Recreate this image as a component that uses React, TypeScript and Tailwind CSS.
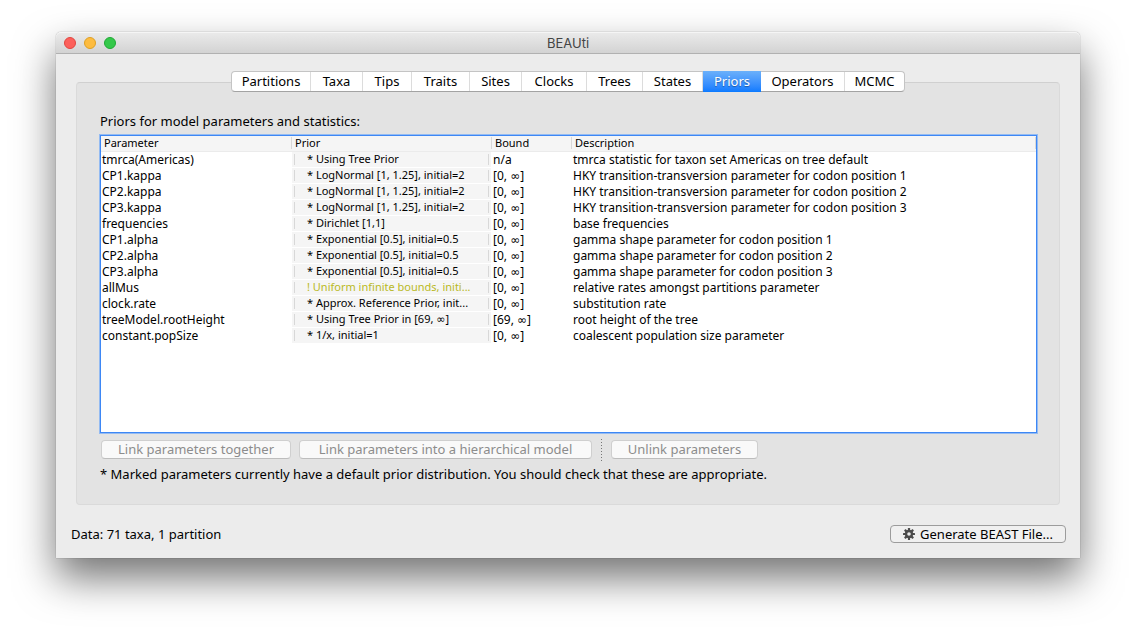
import React, { useState } from "react";

type Tab = { name: string; width: string };

const tabs: Tab[] = [
  { name: "Partitions", width: "w-[79px]" },
  { name: "Taxa", width: "w-[52px]" },
  { name: "Tips", width: "w-[49px]" },
  { name: "Traits", width: "w-[58px]" },
  { name: "Sites", width: "w-[52px]" },
  { name: "Clocks", width: "w-[65px]" },
  { name: "Trees", width: "w-[56px]" },
  { name: "States", width: "w-[60px]" },
  { name: "Priors", width: "w-[58px]" },
  { name: "Operators", width: "w-[84px]" },
  { name: "MCMC", width: "w-[59px]" },
];

type Row = { parameter: string; prior: string; bound: string; description: string; warning?: boolean };

const rows: Row[] = [
  { parameter: "tmrca(Americas)", prior: "* Using Tree Prior", bound: "n/a", description: "tmrca statistic for taxon set Americas on tree default" },
  { parameter: "CP1.kappa", prior: "* LogNormal [1, 1.25], initial=2", bound: "[0, ∞]", description: "HKY transition-transversion parameter for codon position 1" },
  { parameter: "CP2.kappa", prior: "* LogNormal [1, 1.25], initial=2", bound: "[0, ∞]", description: "HKY transition-transversion parameter for codon position 2" },
  { parameter: "CP3.kappa", prior: "* LogNormal [1, 1.25], initial=2", bound: "[0, ∞]", description: "HKY transition-transversion parameter for codon position 3" },
  { parameter: "frequencies", prior: "* Dirichlet [1,1]", bound: "[0, ∞]", description: "base frequencies" },
  { parameter: "CP1.alpha", prior: "* Exponential [0.5], initial=0.5", bound: "[0, ∞]", description: "gamma shape parameter for codon position 1" },
  { parameter: "CP2.alpha", prior: "* Exponential [0.5], initial=0.5", bound: "[0, ∞]", description: "gamma shape parameter for codon position 2" },
  { parameter: "CP3.alpha", prior: "* Exponential [0.5], initial=0.5", bound: "[0, ∞]", description: "gamma shape parameter for codon position 3" },
  { parameter: "allMus", prior: "! Uniform infinite bounds, initi...", bound: "[0, ∞]", description: "relative rates amongst partitions parameter", warning: true },
  { parameter: "clock.rate", prior: "* Approx. Reference Prior, init...", bound: "[0, ∞]", description: "substitution rate" },
  { parameter: "treeModel.rootHeight", prior: "* Using Tree Prior in [69, ∞]", bound: "[69, ∞]", description: "root height of the tree" },
  { parameter: "constant.popSize", prior: "* 1/x, initial=1", bound: "[0, ∞]", description: "coalescent population size parameter" },
];

function Range({ text }: { text: string }) {
  const [before, after] = text.split("∞");
  if (after === undefined) return <>{text}</>;
  return (
    <>
      {before}
      <span className="font-['DejaVu_Sans',sans-serif] leading-none">∞</span>
      {after}
    </>
  );
}

function Gear() {
  return (
    <svg viewBox="0 0 24 24" className="size-3" aria-hidden="true">
      <g fill="#4b4b4b">
        {[0, 45, 90, 135].map((a) => (
          <rect key={a} x="9.8" y="0" width="4.4" height="24" rx="1" transform={`rotate(${a} 12 12)`} />
        ))}
        <circle cx="12" cy="12" r="8.4" />
      </g>
      <circle cx="12" cy="12" r="3.6" fill="#ececec" />
    </svg>
  );
}

function TitleBar() {
  return (
    <header className="grid h-[22px] grid-cols-[1fr_auto_1fr] items-center rounded-t-[5px] border-b border-[#b1b1b1] bg-linear-to-b from-[#ebebeb] to-[#d3d3d3] shadow-[inset_0_1px_0_#f5f5f5]">
      <div className="flex gap-2 pl-2">
        <button type="button" aria-label="Close" className="size-3 rounded-full border border-[#e2463f] bg-[#fc605b]" />
        <button type="button" aria-label="Minimize" className="size-3 rounded-full border border-[#dfa023] bg-[#fdbc40]" />
        <button type="button" aria-label="Zoom" className="size-3 rounded-full border border-[#1fa934] bg-[#34c84a]" />
      </div>
      <h1 className="font-['Inter',sans-serif] text-[13px] leading-4 text-[#444]">BEAUti</h1>
    </header>
  );
}

function LinkButton({ width, children }: { width: string; children: React.ReactNode }) {
  return (
    <button
      type="button"
      disabled
      className={`${width} h-[19px] rounded-[4px] border border-[#cfcfcf] border-b-[#bdbdbd] bg-[#f9f9f9] pb-px text-[13px] leading-4 whitespace-nowrap text-[#8c8c8c]`}
    >
      {children}
    </button>
  );
}

export default function App() {
  const [active, setActive] = useState("Priors");

  return (
    <div className="flex min-h-screen flex-col bg-white px-14 pt-8 pb-20 font-['Noto_Sans','Open_Sans',sans-serif] text-black">
      <div className="flex flex-1 flex-col rounded-t-[5px] bg-[#ececec] shadow-[0_0_1px_rgba(0,0,0,0.6),0_20px_40px_rgba(0,0,0,0.55)]">
        <TitleBar />
        <div className="flex flex-1 flex-col px-5 pt-[17px]">
          <nav role="tablist" className="z-10 flex h-[21px] self-center rounded-[4px] border border-[#c4c4c4] border-b-[#a3a3a3] bg-white">
            {tabs.map((tab) => {
              const selected = tab.name === active;
              return (
                <button
                  key={tab.name}
                  type="button"
                  role="tab"
                  aria-selected={selected}
                  onClick={() => setActive(tab.name)}
                  className={`${tab.width} text-[13px] leading-[19px] first:rounded-l-[3px] last:rounded-r-[3px] ${
                    selected
                      ? "-my-px bg-linear-to-b from-[#6bb0fa] to-[#0a7aff] text-white text-shadow-[0_1px_1px_rgba(0,0,0,0.35)]"
                      : "border-[#dcdcdc] not-last:border-r"
                  }`}
                >
                  {tab.name}
                </button>
              );
            })}
          </nav>
          <main className="-mt-[10px] flex flex-1 flex-col rounded-[4px] border border-[#dadada] border-t-[#d0d0d0] bg-[#e3e3e3] px-[22px] pt-[30px] pb-[22px]">
            <h2 id="priors-label" className="pl-px text-[13px] leading-4">Priors for model parameters and statistics:</h2>
            <div className="ml-px mt-[6px] flex-1 border border-[#3d87f5] bg-white shadow-[0_0_0_1px_#94bbf2]">
              <table aria-labelledby="priors-label" className="w-full table-fixed border-collapse text-left">
                <colgroup>
                  <col className="w-[191px]" />
                  <col className="w-[200px]" />
                  <col className="w-[80px]" />
                  <col />
                </colgroup>
                <thead>
                  <tr className="h-[15px] bg-[#f5f5f5] text-[11px] leading-[14px]">
                    {["Parameter", "Prior", "Bound", "Description"].map((h) => (
                      <th key={h} className="border-b border-[#ebebeb] p-0 font-normal">
                        <div className="border-r border-[#d8d8d8] pl-[3px] leading-3">{h}</div>
                      </th>
                    ))}
                  </tr>
                </thead>
                <tbody className="text-[12px] leading-4">
                  {rows.map((row) => (
                    <tr key={row.parameter} className="h-4">
                      <td className="p-0 pl-px">{row.parameter}</td>
                      <td className="p-0 pr-px">
                        <button
                          type="button"
                          className={`flex h-[15px] w-full items-center bg-[#f5f5f5] px-[2px] text-[11px] leading-[14px] whitespace-nowrap ${row.warning ? "text-[#b9b924]" : ""}`}
                        >
                          <span className="h-[11px] flex-1 border-x border-[#d8d8d8] pl-3 text-left leading-[9px]">
                            <Range text={row.prior} />
                          </span>
                        </button>
                      </td>
                      <td className="p-0 pl-px">
                        <Range text={row.bound} />
                      </td>
                      <td className="p-0 pl-px">{row.description}</td>
                    </tr>
                  ))}
                </tbody>
              </table>
            </div>
            <div className="mt-[7px] flex items-center gap-2 pl-[2px]">
              <LinkButton width="w-[190px]">Link parameters together</LinkButton>
              <LinkButton width="w-[293px]">Link parameters into a hierarchical model</LinkButton>
              <div className="mx-px -my-1 h-[22px] w-px bg-[repeating-linear-gradient(to_bottom,#777_0_1px,transparent_1px_3px)]" />
              <LinkButton width="w-[147px]">Unlink parameters</LinkButton>
            </div>
            <p className="mt-[7px] pl-px text-[13px] leading-4">
              * Marked parameters currently have a default prior distribution. You should check that these are appropriate.
            </p>
          </main>
        </div>
        <footer className="flex items-center justify-between pr-[14px] pl-[15px] pt-5 pb-[15px]">
          <span className="text-[13px] leading-4">Data: 71 taxa, 1 partition</span>
          <button
            type="button"
            className="flex h-[18px] items-center gap-[5px] rounded-[4px] border border-[#9c9c9c] bg-[#f0f0f0] px-3 text-[13px] leading-4 whitespace-nowrap"
          >
            <Gear />
            Generate BEAST File...
          </button>
        </footer>
      </div>
    </div>
  );
}
